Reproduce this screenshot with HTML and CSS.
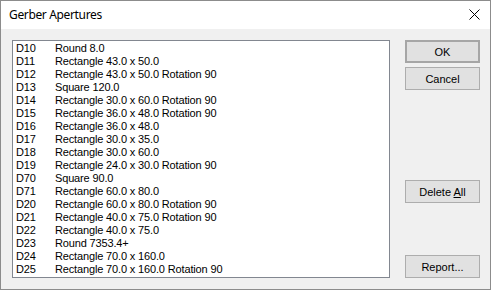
FILE: index.html
```html
<!doctype html>
<html lang="en">
<head>
    <meta charset="UTF-8">
    <title>Gerber Apertures</title>
    <link rel="stylesheet" href="styles.css">
</head>
<body>
<div class="dialog">
    <div class="title-bar">
        <span class="title-text">Gerber Apertures</span>
        <span class="close-btn">
            <svg width="11" height="11" viewBox="0 0 11 11"><path d="M0.5 0.5 L10.5 10.5 M10.5 0.5 L0.5 10.5" stroke="#000" stroke-width="1" fill="none"/></svg>
        </span>
    </div>
    <div class="dialog-body">
        <ul class="aperture-list">
            <li><span class="code">D10</span><span>Round 8.0</span></li>
            <li><span class="code">D11</span><span>Rectangle 43.0 x 50.0</span></li>
            <li><span class="code">D12</span><span>Rectangle 43.0 x 50.0 Rotation 90</span></li>
            <li><span class="code">D13</span><span>Square 120.0</span></li>
            <li><span class="code">D14</span><span>Rectangle 30.0 x 60.0 Rotation 90</span></li>
            <li><span class="code">D15</span><span>Rectangle 36.0 x 48.0 Rotation 90</span></li>
            <li><span class="code">D16</span><span>Rectangle 36.0 x 48.0</span></li>
            <li><span class="code">D17</span><span>Rectangle 30.0 x 35.0</span></li>
            <li><span class="code">D18</span><span>Rectangle 30.0 x 60.0</span></li>
            <li><span class="code">D19</span><span>Rectangle 24.0 x 30.0 Rotation 90</span></li>
            <li><span class="code">D70</span><span>Square 90.0</span></li>
            <li><span class="code">D71</span><span>Rectangle 60.0 x 80.0</span></li>
            <li><span class="code">D20</span><span>Rectangle 60.0 x 80.0 Rotation 90</span></li>
            <li><span class="code">D21</span><span>Rectangle 40.0 x 75.0 Rotation 90</span></li>
            <li><span class="code">D22</span><span>Rectangle 40.0 x 75.0</span></li>
            <li><span class="code">D23</span><span>Round 7353.4+</span></li>
            <li><span class="code">D24</span><span>Rectangle 70.0 x 160.0</span></li>
            <li><span class="code">D25</span><span>Rectangle 70.0 x 160.0 Rotation 90</span></li>
        </ul>
        <div class="btn-col">
            <button class="btn btn-default">OK</button>
            <button class="btn">Cancel</button>
            <button class="btn btn-delete">Delete <u>A</u>ll</button>
            <button class="btn btn-report">Report...</button>
        </div>
    </div>
</div>
</body>
</html>
```

FILE: styles.css
```css
/*reset*/
body, ul, li, button {
    margin: 0;
    padding: 0;
}
ul { list-style: none; }
/*/reset*/

body {
    background-color: #f0f0f0;
}
.dialog {
    width: 491px;
    height: 290px;
    box-sizing: border-box;
    border: 1px solid #8c8c8c;
    background-color: #f0f0f0;
    display: flex;
    flex-direction: column;
}
.title-bar {
    height: 30px;
    background-color: #fff;
    display: flex;
    align-items: center;
    justify-content: space-between;
    padding: 0 10px 0 8px;
}
.title-text {
    font: 12px "Noto Sans", "Open Sans", sans-serif;
    letter-spacing: -0.35px;
    color: #000;
    margin-top: -1px;
}
.close-btn {
    display: flex;
    width: 11px;
    height: 11px;
    margin-top: -1px;
}
.dialog-body {
    flex: 1;
    display: flex;
    padding: 11px 10px 11px 11px;
}
.aperture-list {
    width: 378px;
    box-sizing: border-box;
    border: 1px solid #828790;
    background-color: #fff;
    padding: 1px 3px;
    overflow: hidden;
    font: 11px "Liberation Sans", Arial, sans-serif;
    letter-spacing: -0.15px;
    color: #000;
}
.aperture-list li {
    height: 13px;
    line-height: 13px;
    white-space: nowrap;
}
.code {
    display: inline-block;
    width: 39px;
}
.btn-col {
    margin-left: 15px;
    display: flex;
    flex-direction: column;
}
.btn {
    width: 75px;
    height: 23px;
    box-sizing: border-box;
    border: 1px solid #adadad;
    background-color: #e1e1e1;
    font: 11px "Liberation Sans", Arial, sans-serif;
    color: #000;
    margin-bottom: 4px;
}
.btn-default {
    border: 2px solid #a6a6a6;
}
.btn-delete {
    margin-top: 86px;
}
.btn-report {
    margin-top: auto;
    margin-bottom: 0;
}
```
